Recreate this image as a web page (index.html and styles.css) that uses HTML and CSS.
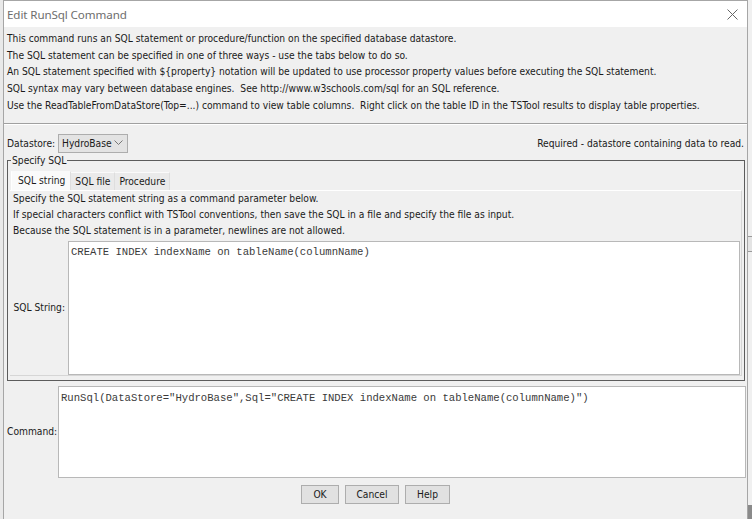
FILE: index.html
```html
<!DOCTYPE html>
<html>
<head>
<meta charset="utf-8">
<link rel="stylesheet" href="styles.css">
</head>
<body>
<div class="desk">
  <div class="window">
    <div class="titlebar">
      <span class="title">Edit RunSql Command</span>
      <svg class="close" width="11" height="11" viewBox="0 0 11 11"><path d="M0.5 0.5 L10.5 10.5 M10.5 0.5 L0.5 10.5" stroke="#666" stroke-width="1" fill="none"/></svg>
    </div>
    <div class="content">
      <div class="intro">
        <div>This command runs an SQL statement or procedure/function on the specified database datastore.</div>
        <div>The SQL statement can be specified in one of three ways - use the tabs below to do so.</div>
        <div>An SQL statement specified with ${property} notation will be updated to use processor property values before executing the SQL statement.</div>
        <div>SQL syntax may vary between database engines.&nbsp; See http://www.w3schools.com/sql for an SQL reference.</div>
        <div>Use the ReadTableFromDataStore(Top=...) command to view table columns.&nbsp; Right click on the table ID in the TSTool results to display table properties.</div>
      </div>
      <div class="sep"></div>
      <div class="dsrow">
        <span class="lbl">Datastore:</span>
        <span class="combo">HydroBase<svg class="chev" width="9" height="6" viewBox="0 0 9 6"><path d="M0.5 0.5 L4.5 4.5 L8.5 0.5" stroke="#777" fill="none"/></svg></span>
        <span class="req">Required - datastore containing data to read.</span>
      </div>
      <fieldset class="group">
        <legend>Specify SQL</legend>
        <div class="tabs">
          <span class="tab sel">SQL string</span>
          <span class="tab">SQL file</span>
          <span class="tab">Procedure</span>
        </div>
        <div class="panel">
          <div class="ptext">
            <div>Specify the SQL statement string as a command parameter below.</div>
            <div>If special characters conflict with TSTool conventions, then save the SQL in a file and specify the file as input.</div>
            <div>Because the SQL statement is in a parameter, newlines are not allowed.</div>
          </div>
          <div class="sqlrow">
            <span class="lbl2">SQL String:</span>
            <div class="area sqlarea">CREATE INDEX indexName on tableName(columnName)</div>
          </div>
        </div>
      </fieldset>
      <div class="cmdrow">
        <span class="lbl3">Command:</span>
        <div class="area cmdarea">RunSql(DataStore="HydroBase",Sql="CREATE INDEX indexName on tableName(columnName)")</div>
      </div>
      <div class="buttons">
        <span class="btn ok">OK</span>
        <span class="btn cancel">Cancel</span>
        <span class="btn help">Help</span>
      </div>
    </div>
  </div>
  <div class="rightstrip">
    <div class="rs1"></div>
    <div class="rs2"></div>
    <div class="rs3"></div>
  </div>
</div>
</body>
</html>
```

FILE: styles.css
```css
html, body {
  margin: 0;
  padding: 0;
}
body {
  width: 752px;
  height: 519px;
  overflow: hidden;
  background: #e9e9e9;
  font-family: "DejaVu Sans Condensed", "DejaVu Sans", "Liberation Sans", sans-serif;
  font-stretch: condensed;
}
.desk {
  display: flex;
  height: 519px;
}
.window {
  margin-left: 3px;
  width: 745px;
  height: 519px;
  box-sizing: border-box;
  border-left: 1px solid #a6a6a6;
  border-right: 1px solid #a6a6a6;
  background: #f0f0f0;
  display: flex;
  flex-direction: column;
}
.rightstrip {
  flex: 1;
  background: #f0f0f0;
  display: flex;
  flex-direction: column;
}
.rs1 {
  height: 236px;
}
.rs2 {
  height: 14px;
  border-top: 1px solid #9a9a9a;
  border-bottom: 1px solid #9a9a9a;
  background: #e4e4e4;
}
.rs3 {
  margin-top: 253px;
  flex: 1;
  background: #8a8a8a;
}
.titlebar {
  height: 26px;
  flex: none;
  background: #ffffff;
  border-top: 1px solid #a6a6a6;
  display: flex;
  align-items: center;
  justify-content: space-between;
  padding: 0 9px 0 3px;
}
.title {
  font-family: "Noto Sans", "Open Sans", sans-serif;
  font-stretch: normal;
  font-size: 11.6px;
  color: #6d6d6d;
  letter-spacing: -0.1px;
}
.close {
  margin-top: 0;
}
.content {
  font-size: 10.2px;
  color: #1a1a1a;
  display: flex;
  flex-direction: column;
}
.intro {
  padding: 4px 0 0 3px;
  height: 83.5px;
  line-height: 16.7px;
  white-space: nowrap;
}
.sep {
  margin-top: 8px;
  height: 0;
  border-top: 1px solid #a0a0a0;
  border-bottom: 1px solid #ffffff;
}
.dsrow {
  display: flex;
  align-items: center;
  height: 19px;
  margin-top: 9px;
  padding: 0 3px 0 3px;
}
.lbl {
  width: 51px;
}
.combo {
  display: flex;
  align-items: center;
  width: 70px;
  height: 19px;
  box-sizing: border-box;
  padding: 0 4px 0 3px;
  border: 1px solid #adadad;
  background: #e3e3e3;
  justify-content: space-between;
}
.req {
  margin-left: auto;
}
.group {
  margin: 2px 2px 0 3px;
  padding: 0 2px 2px 2px;
  border: 1px solid #5c5c5c;
  min-width: 0;
  height: 226px;
  box-sizing: border-box;
}
.group legend {
  padding: 0 1px;
  margin-left: 1px;
  line-height: 12px;
}
.tabs {
  display: flex;
  margin-top: 4px;
  height: 19px;
  padding-left: 1px;
}
.tab {
  display: flex;
  align-items: center;
  padding: 0 4px;
  border-top: 1px solid #fafafa;
  border-right: 1px solid #dedede;
  background: #eaeaea;
  margin-top: 1px;
}
.tab.sel {
  background: #fafafa;
  margin-top: 0;
  padding: 0 5px 0 6px;
  border-left: 1px solid #ffffff;
}
.panel {
  height: 186px;
  box-sizing: border-box;
  border-top: 1px solid #ffffff;
  border-right: 1px solid #d6d6d6;
  border-bottom: 1px solid #d6d6d6;
  padding: 0 1px 0 1px;
}
.ptext {
  line-height: 16px;
  padding-left: 2px;
}
.sqlrow {
  display: flex;
  align-items: center;
  margin-top: 2px;
  height: 134px;
}
.lbl2 {
  width: 54px;
  text-align: right;
  margin-right: 3px;
  flex: none;
}
.area {
  background: #ffffff;
  border: 1px solid #b8b8b8;
  font-family: "Liberation Mono", "Courier New", monospace;
  font-stretch: normal;
  font-size: 10.6px;
  color: #3a3a3a;
  box-sizing: border-box;
  padding: 4px 2px;
  white-space: pre;
}
.sqlarea {
  flex: 1;
  height: 134px;
}
.cmdrow {
  display: flex;
  align-items: center;
  margin-top: 5px;
  padding: 0 1px 0 3px;
  height: 92px;
}
.lbl3 {
  width: 51px;
}
.cmdarea {
  flex: 1;
  height: 92px;
  padding: 5px 2px;
}
.buttons {
  display: flex;
  justify-content: center;
  gap: 6px;
  margin-top: 7px;
}
.btn {
  height: 19px;
  box-sizing: border-box;
  border: 1px solid #adadad;
  background: #e1e1e1;
  display: flex;
  align-items: center;
  justify-content: center;
}
.ok { width: 38px; }
.cancel { width: 54px; }
.help { width: 45px; }
```
